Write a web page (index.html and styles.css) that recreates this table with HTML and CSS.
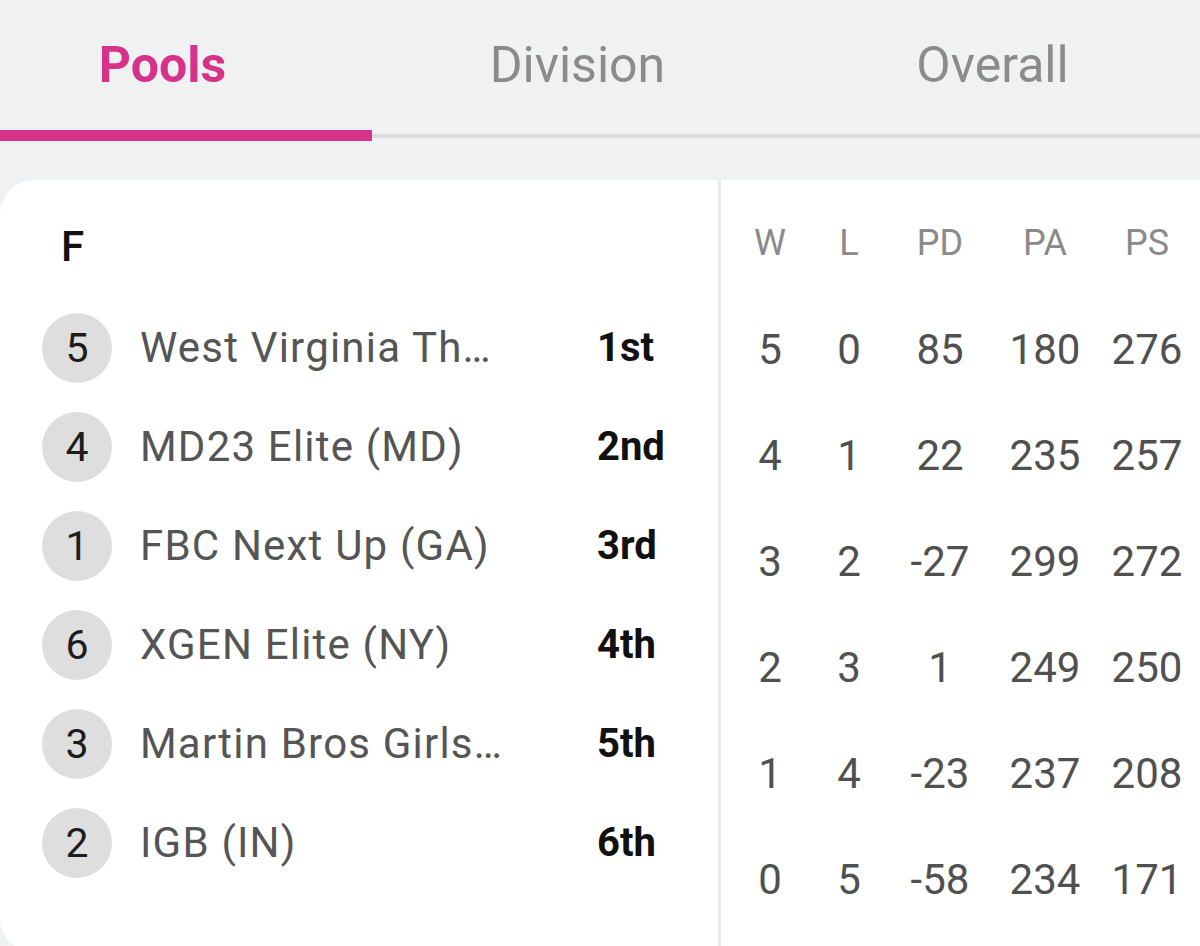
FILE: index.html
```html
<!DOCTYPE html>
<html lang="en">
<head>
<meta charset="utf-8">
<title>Pools standings</title>
<link rel="stylesheet" href="styles.css">
</head>
<body>
<div class="page">
  <nav class="tabs">
    <div class="tab active">Pools</div>
    <div class="tab">Division</div>
    <div class="tab">Overall</div>
  </nav>
  <div class="track"><div class="ink"></div><div class="rail"></div></div>

  <section class="card">
    <div class="pool">
      <div class="pool-title">F</div>
      <div class="team"><span class="seed">5</span><span class="name">West Virginia Th…</span><span class="rank">1st</span></div>
      <div class="team"><span class="seed">4</span><span class="name">MD23 Elite (MD)</span><span class="rank">2nd</span></div>
      <div class="team"><span class="seed">1</span><span class="name">FBC Next Up (GA)</span><span class="rank">3rd</span></div>
      <div class="team"><span class="seed">6</span><span class="name">XGEN Elite (NY)</span><span class="rank">4th</span></div>
      <div class="team"><span class="seed">3</span><span class="name">Martin Bros Girls…</span><span class="rank">5th</span></div>
      <div class="team"><span class="seed">2</span><span class="name">IGB (IN)</span><span class="rank">6th</span></div>
    </div>
    <div class="stats">
      <div class="stat-row head"><span>W</span><span>L</span><span>PD</span><span>PA</span><span>PS</span></div>
      <div class="stat-row"><span>5</span><span>0</span><span>85</span><span>180</span><span>276</span></div>
      <div class="stat-row"><span>4</span><span>1</span><span>22</span><span>235</span><span>257</span></div>
      <div class="stat-row"><span>3</span><span>2</span><span>-27</span><span>299</span><span>272</span></div>
      <div class="stat-row"><span>2</span><span>3</span><span>1</span><span>249</span><span>250</span></div>
      <div class="stat-row"><span>1</span><span>4</span><span>-23</span><span>237</span><span>208</span></div>
      <div class="stat-row"><span>0</span><span>5</span><span>-58</span><span>234</span><span>171</span></div>
    </div>
  </section>
</div>
</body>
</html>
```

FILE: styles.css
```css
* { box-sizing: border-box; }
html, body {
  margin: 0;
  padding: 0;
  background: #f0f1f3;
  overflow: hidden;
}
body {
  font-family: Roboto, "Liberation Sans", sans-serif;
  width: 1200px;
  height: 946px;
}
.page {
  width: 1200px;
  height: 946px;
  overflow: hidden;
}
.tabs {
  display: flex;
  margin-left: -45px;
  height: 130px;
}
.tab {
  width: 415px;
  flex: none;
  text-align: center;
  line-height: 130px;
  font-size: 50px;
  color: #8b8b8d;
}
.tab.active {
  color: #d6328a;
  font-weight: 700;
}
.track {
  display: flex;
  align-items: center;
  height: 11px;
}
.ink {
  width: 372px;
  height: 11px;
  background: #d6328a;
}
.rail {
  flex: 1;
  height: 4px;
  background: #d9dadd;
}
.card {
  margin-top: 39px;
  display: flex;
  background: #ffffff;
  border-radius: 34px 0 0 34px;
  height: 772px;
}
.pool {
  width: 718px;
  flex: none;
  padding-left: 42px;
}
.pool-title {
  height: 104px;
  margin-top: 14px;
  display: flex;
  align-items: center;
  padding-left: 19px;
  font-size: 42px;
  font-weight: 500;
  color: #111;
}
.team {
  height: 99px;
  display: flex;
  align-items: center;
}
.seed {
  width: 70px;
  height: 70px;
  border-radius: 50%;
  background: #dedede;
  color: #1c1c1c;
  font-size: 41px;
  display: flex;
  align-items: center;
  justify-content: center;
  flex: none;
}
.name {
  margin-left: 28px;
  width: 457px;
  font-size: 42px;
  letter-spacing: 1.2px;
  color: #555;
  white-space: nowrap;
  overflow: hidden;
}
.rank {
  font-size: 40px;
  font-weight: 700;
  color: #111;
}
.stats {
  flex: 1;
  border-left: 3px solid #ececec;
  padding-left: 9px;
}
.stat-row {
  display: grid;
  grid-template-columns: 80px 78px 104px 106px 98px;
  height: 106px;
  align-items: center;
  font-size: 42px;
  color: #505050;
}
.stat-row span {
  text-align: center;
}
.stat-row.head {
  margin-top: 10px;
  font-size: 36px;
  color: #8a8a8a;
}
```
